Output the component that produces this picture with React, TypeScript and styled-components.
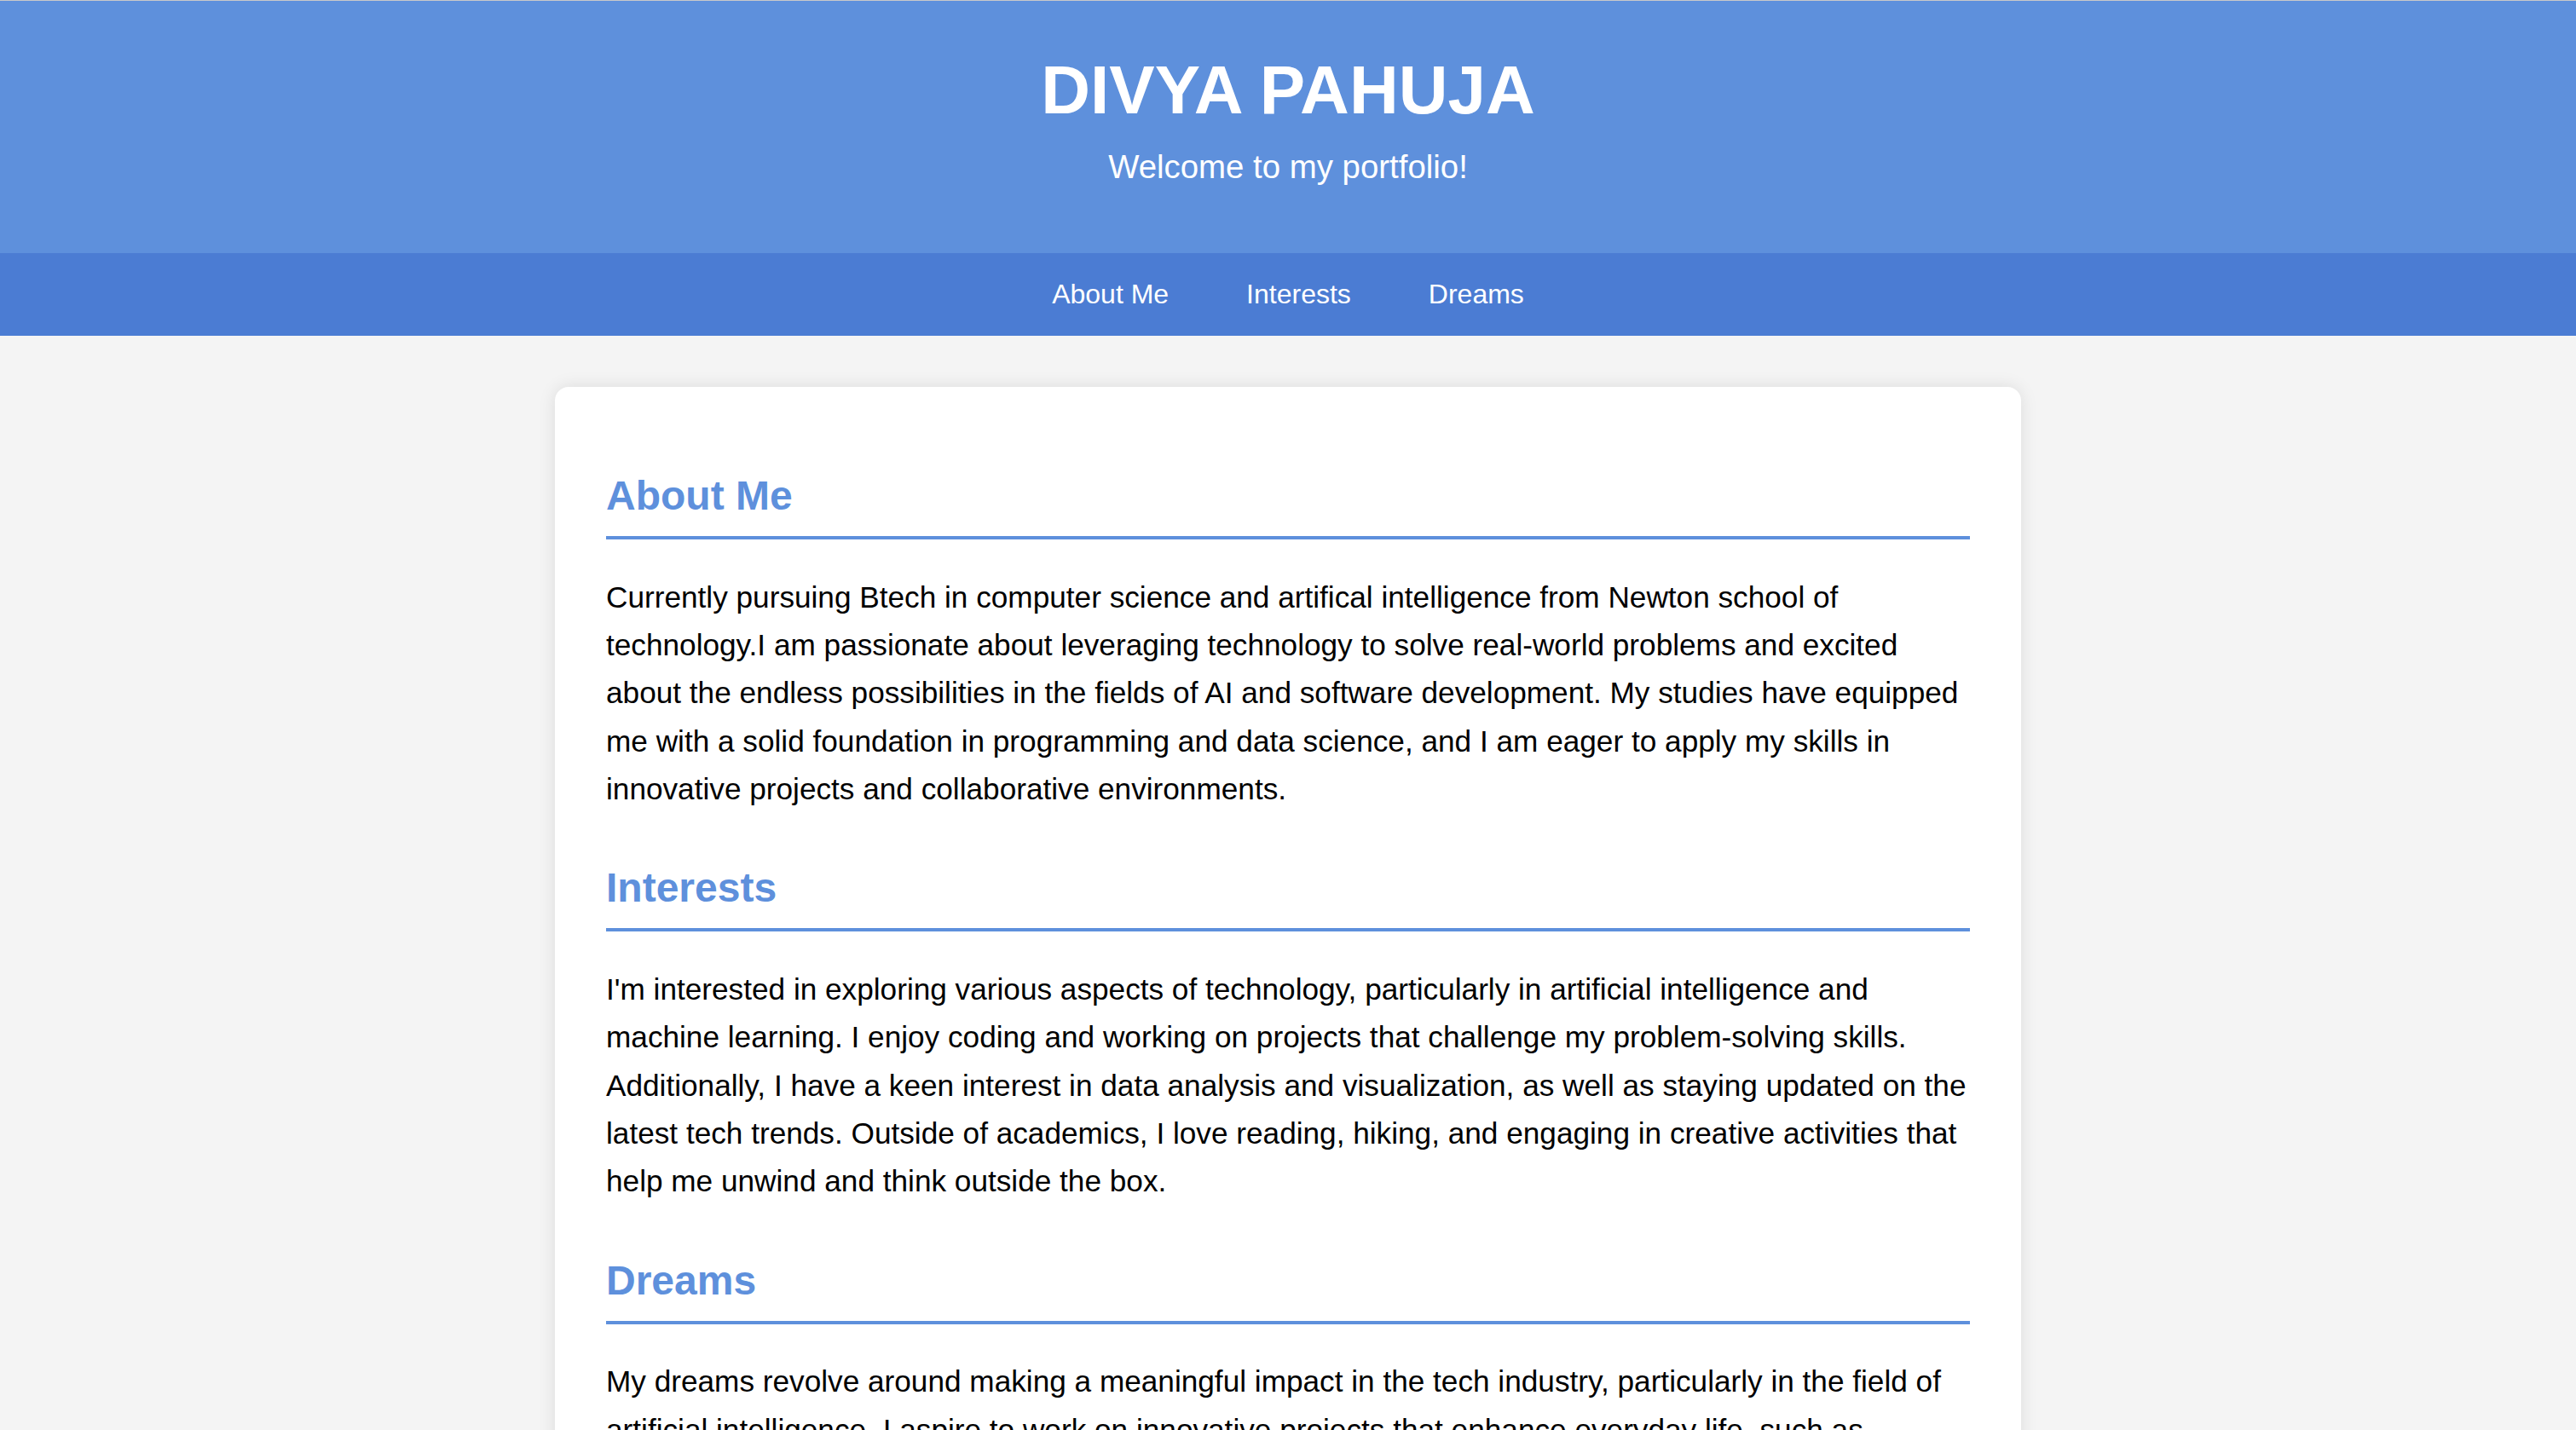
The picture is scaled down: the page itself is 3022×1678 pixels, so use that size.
import React from "react";
import styled, { createGlobalStyle } from "styled-components";

const GlobalStyle = createGlobalStyle`
  html, body {
    margin: 0;
    padding: 0;
  }
  body {
    background: #f4f4f4;
    color: #000;
    font-family: "Liberation Sans", Arial, Helvetica, sans-serif;
  }
`;

const Header = styled.header`
  background: #5e90dc;
  border-top: 1px solid #c9c9c9;
  color: #fff;
  text-align: center;
  padding: 59px 0 79px;
`;

const Title = styled.h1`
  margin: 0;
  font-size: 80px;
  font-weight: 700;
  line-height: normal;
`;

const Subtitle = styled.p`
  margin: 22px 0 0;
  font-size: 38.4px;
  line-height: normal;
`;

const Nav = styled.nav`
  background: #4b7cd3;
  height: 97px;
  display: flex;
  justify-content: center;
  align-items: center;
  gap: 91px;
`;

const NavLink = styled.a`
  color: #fff;
  text-decoration: none;
  font-size: 32px;
  line-height: normal;
`;

const Card = styled.main`
  max-width: 1600px;
  margin: 60px auto;
  padding: 60px;
  background: #fff;
  border-radius: 16px;
  box-shadow: 0 0 20px rgba(0, 0, 0, 0.1);
`;

const Section = styled.section`
  margin-bottom: 60px;
`;

const Heading = styled.h2`
  margin: 39.84px 0;
  padding-bottom: 20px;
  border-bottom: 4px solid #5e90dc;
  color: #5e90dc;
  font-size: 48px;
  font-weight: 700;
  line-height: normal;
`;

const Text = styled.p`
  margin: 35.2px 0;
  font-size: 35.2px;
  line-height: 1.6;
`;

const sections = [
  {
    id: "about",
    title: "About Me",
    text: "Currently pursuing Btech in computer science and artifical intelligence from Newton school of technology.I am passionate about leveraging technology to solve real-world problems and excited about the endless possibilities in the fields of AI and software development. My studies have equipped me with a solid foundation in programming and data science, and I am eager to apply my skills in innovative projects and collaborative environments.",
  },
  {
    id: "interests",
    title: "Interests",
    text: "I'm interested in exploring various aspects of technology, particularly in artificial intelligence and machine learning. I enjoy coding and working on projects that challenge my problem-solving skills. Additionally, I have a keen interest in data analysis and visualization, as well as staying updated on the latest tech trends. Outside of academics, I love reading, hiking, and engaging in creative activities that help me unwind and think outside the box.",
  },
  {
    id: "dreams",
    title: "Dreams",
    text: "My dreams revolve around making a meaningful impact in the tech industry, particularly in the field of artificial intelligence. I aspire to work on innovative projects that enhance everyday life, such as developing smart systems for healthcare, education and sustainability. Ultimately, I hope to lead a team of passionate engineers and build technology that makes the world a better place.",
  },
];

export default function App() {
  return (
    <>
      <GlobalStyle />
      <Header>
        <Title>DIVYA PAHUJA</Title>
        <Subtitle>Welcome to my portfolio!</Subtitle>
      </Header>
      <Nav>
        {sections.map((s) => (
          <NavLink key={s.id} href={"#" + s.id}>
            {s.title}
          </NavLink>
        ))}
      </Nav>
      <Card>
        {sections.map((s) => (
          <Section key={s.id} id={s.id}>
            <Heading>{s.title}</Heading>
            <Text>{s.text}</Text>
          </Section>
        ))}
      </Card>
    </>
  );
}
